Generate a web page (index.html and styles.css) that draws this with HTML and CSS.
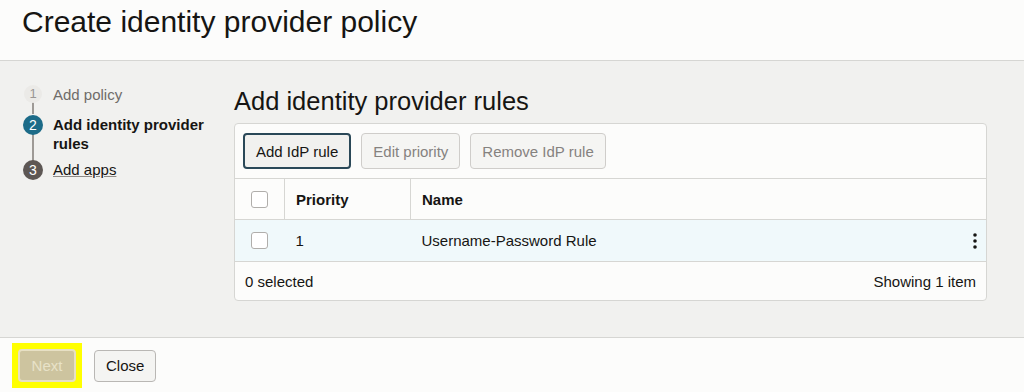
FILE: index.html
```html
<!DOCTYPE html>
<html lang="en">
<head>
    <meta charset="UTF-8">
    <meta name="viewport" content="width=device-width, initial-scale=1.0">
    <title>Create identity provider policy</title>
    <link rel="stylesheet" href="styles.css">
</head>
<body>
    <header class="page-header">
        <h1>Create identity provider policy</h1>
    </header>

    <div class="wizard">
        <ol class="steps">
            <li class="step done">
                <span class="step-num">1</span>
                <span class="step-label">Add policy</span>
            </li>
            <li class="step current">
                <span class="step-num">2</span>
                <span class="step-label">Add identity provider rules</span>
            </li>
            <li class="step next">
                <span class="step-num">3</span>
                <a class="step-label" href="#">Add apps</a>
            </li>
        </ol>

        <main class="content">
            <h2>Add identity provider rules</h2>
            <div class="panel">
                <div class="toolbar">
                    <button class="btn btn-focus">Add IdP rule</button>
                    <button class="btn btn-disabled">Edit priority</button>
                    <button class="btn btn-disabled">Remove IdP rule</button>
                </div>
                <table class="rules">
                    <thead>
                        <tr>
                            <th class="col-check"><span class="checkbox"></span></th>
                            <th class="col-priority">Priority</th>
                            <th>Name</th>
                            <th class="col-menu"></th>
                        </tr>
                    </thead>
                    <tbody>
                        <tr class="row-hover">
                            <td class="col-check"><span class="checkbox"></span></td>
                            <td class="col-priority">1</td>
                            <td>Username-Password Rule</td>
                            <td class="col-menu">
                                <svg width="6" height="18" viewBox="0 0 6 18">
                                    <circle cx="3" cy="3" r="1.8" fill="#161513"/>
                                    <circle cx="3" cy="9" r="1.8" fill="#161513"/>
                                    <circle cx="3" cy="15" r="1.8" fill="#161513"/>
                                </svg>
                            </td>
                        </tr>
                    </tbody>
                </table>
                <div class="panel-footer">
                    <span>0 selected</span>
                    <span>Showing 1 item</span>
                </div>
            </div>
        </main>
    </div>

    <footer class="page-footer">
        <span class="highlight"><button class="btn btn-next">Next</button></span>
        <button class="btn btn-close">Close</button>
    </footer>
</body>
</html>
```

FILE: styles.css
```css
body {
    margin: 0;
    font-family: "Liberation Sans", Arial, sans-serif;
    font-size: 15px;
    color: #161513;
    background-color: #fcfcfb;
    height: 392px;
    overflow: hidden;
}
.page-header {
    height: 61px;
    box-sizing: border-box;
    padding: 4px 22px 0;
    border-bottom: 1px solid #d6d6d3;
    background-color: #fcfcfb;
}
.page-header h1 {
    margin: 0;
    font-size: 30px;
    font-weight: normal;
    line-height: 36px;
    color: #161513;
}
.wizard {
    display: flex;
    height: 277px;
    box-sizing: border-box;
    background-color: #f1f1ef;
    border-bottom: 1px solid #d6d6d3;
    padding: 24px 0 0 24px;
}
.steps {
    list-style: none;
    margin: 0;
    padding: 0;
    width: 210px;
}
.step {
    display: flex;
    align-items: flex-start;
    position: relative;
    line-height: 19px;
}
.step + .step {
    margin-top: 11px;
}
.step.next {
    margin-top: 7px;
}
.step:not(:last-child)::after {
    content: "";
    position: absolute;
    left: 8px;
    top: 17px;
    bottom: -10px;
    width: 2px;
    background-color: #9e9a96;
}
.step-num {
    flex: 0 0 auto;
    width: 18px;
    height: 18px;
    border-radius: 50%;
    font-size: 13px;
    line-height: 18px;
    text-align: center;
    color: #fff;
    margin-right: 11px;
    position: relative;
    z-index: 1;
}
.step.done .step-num {
    background-color: #ebeae7;
    color: #9a9794;
}
.step.done .step-label {
    color: #6f6c69;
}
.step.current .step-num,
.step.next .step-num {
    width: 20px;
    height: 20px;
    line-height: 20px;
    margin-left: -1px;
    margin-right: 10px;
    font-size: 14px;
}
.step.current .step-num {
    background-color: #1c6b88;
}
.step.current .step-label {
    font-weight: bold;
    width: 160px;
}
.step.next .step-num {
    background-color: #5d5754;
}
.step.next .step-label {
    color: #161513;
    text-decoration: underline;
    text-decoration-color: #8f8b87;
}
.content {
    width: 753px;
}
.content h2 {
    margin: 0 0 6px;
    font-size: 25.5px;
    font-weight: normal;
    line-height: 32px;
    color: #161513;
}
.panel {
    background-color: #fcfcfb;
    border: 1px solid #d6d6d3;
    border-radius: 4px;
}
.toolbar {
    display: flex;
    gap: 10px;
    padding: 9px 8px 9px;
    border-bottom: 1px solid #d6d6d3;
}
.btn {
    font-family: inherit;
    font-size: 15px;
    height: 36px;
    border-radius: 4px;
    background-color: #f5f5f3;
    cursor: pointer;
}
.btn-focus {
    border: 2px solid #2a4858;
    background-color: #f1f1ef;
    color: #161513;
    padding: 0 11px;
}
.btn-disabled {
    border: 1px solid #cfcdca;
    color: #85827f;
    padding: 0 11px;
}
.rules {
    width: 100%;
    border-collapse: collapse;
}
.rules th {
    text-align: left;
    font-weight: bold;
    height: 40px;
    padding: 0 11px;
    border-bottom: 1px solid #d6d6d3;
}
.rules th + th {
    border-left: 1px solid #d6d6d3;
}
.rules th.col-menu {
    border-left: none;
}
.rules td {
    height: 41px;
    padding: 0 11px;
    border-bottom: 1px solid #d6d6d3;
}
.rules .col-check {
    width: 28px;
    padding: 0 5px 0 16px;
}
.rules .col-priority {
    width: 103px;
}
.rules .col-menu {
    width: 6px;
    padding: 0 8px 0 0;
    text-align: right;
}
.rules .col-menu svg {
    display: block;
}
.row-hover td {
    background-color: #f0f9fb;
}
.checkbox {
    display: block;
    width: 15px;
    height: 15px;
    border: 1px solid #b0aeab;
    border-radius: 3px;
    background-color: #fff;
}
.panel-footer {
    display: flex;
    justify-content: space-between;
    padding: 0 10px;
    height: 38px;
    align-items: center;
}
.page-footer {
    display: flex;
    align-items: center;
    gap: 12px;
    padding: 5px 0 0 12px;
}
.highlight {
    display: flex;
    padding: 6px;
    background-color: #ffff00;
}
.btn-next {
    height: 33px;
    width: 58px;
    padding: 0;
    border: 2px solid #e7e0c4;
    background-color: #cdc49f;
    color: #e8e2c8;
}
.btn-close {
    height: 32px;
    padding: 0 11px;
    border: 1px solid #b9b7b4;
    background-color: #f4f4f2;
    color: #161513;
}
```
